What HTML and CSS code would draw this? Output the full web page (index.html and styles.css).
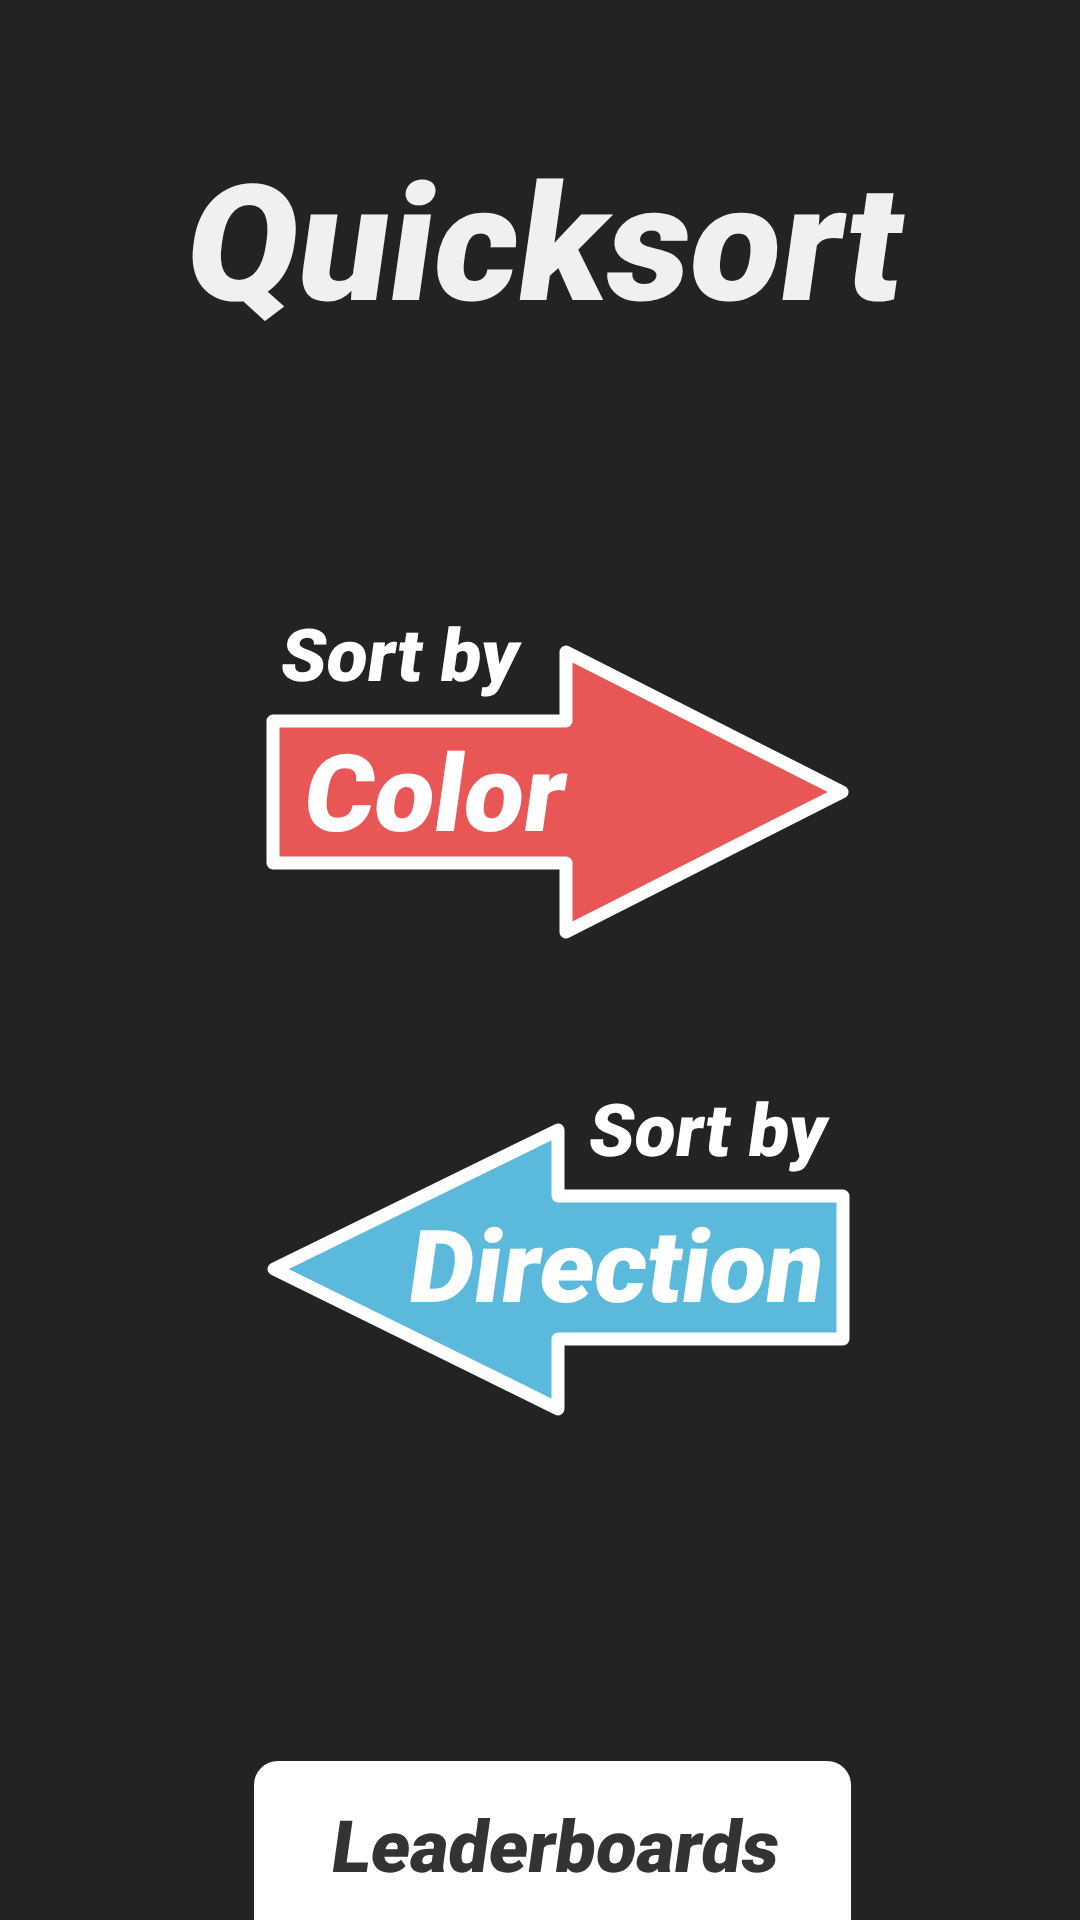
FILE: index.html
```html
<!DOCTYPE html>
<html lang="en">
<head>
<meta charset="utf-8">
<title>Quicksort</title>
<link rel="stylesheet" href="styles.css">
</head>
<body>
<main class="screen">
  <h1 class="title"><span class="slant">Quicksort</span></h1>

  <section class="arrow-block arrow-red">
    <svg class="arrow-shape" viewBox="0 0 1080 330" width="1080" height="330">
      <polygon points="273,101 566,101 566,32 842,172 566,312 566,243 273,243" fill="#E95656" stroke="#FFFFFF" stroke-width="13" stroke-linejoin="round"/>
    </svg>
    <span class="label label-red slant">Sort by</span>
    <span class="word word-red slant">Color</span>
  </section>

  <section class="arrow-block arrow-blue">
    <svg class="arrow-shape" viewBox="0 0 1080 340" width="1080" height="340">
      <polygon points="274,179 558,40 558,106 843,106 843,249 558,249 558,319" fill="#5BBADC" stroke="#FFFFFF" stroke-width="13" stroke-linejoin="round"/>
    </svg>
    <span class="label label-blue slant">Sort by</span>
    <span class="word word-blue slant">Direction</span>
  </section>

  <div class="spacer"></div>

  <div class="leader-btn"><span class="slant">Leaderboards</span></div>
</main>
</body>
</html>
```

FILE: styles.css
```css
html, body {
  margin: 0;
  padding: 0;
  background: #232323;
}

.screen {
  width: 1080px;
  height: 1920px;
  display: flex;
  flex-direction: column;
  align-items: stretch;
  overflow: hidden;
  font-family: "Roboto", "Noto Sans", sans-serif;
  font-style: normal;
  font-weight: 900;
}

.slant {
  display: inline-block;
  font-style: normal;
  font-synthesis: none;
  transform: skewX(-8deg);
  transform-origin: 50% 84%;
}

.title {
  margin: 0;
  padding-top: 164px;
  padding-right: 4px;
  height: 192px;
  line-height: 162px;
  font-size: 162px;
  font-weight: 900;
  color: #F0F0F0;
  text-align: center;
}

.arrow-block {
  position: relative;
  width: 1080px;
}

.arrow-red {
  margin-top: 264px;
  height: 330px;
}

.arrow-blue {
  margin-top: 140px;
  height: 340px;
}

.arrow-shape {
  display: block;
}

.label,
.word {
  position: absolute;
  line-height: 1;
  color: #FFFFFF;
  white-space: nowrap;
}

.label {
  font-size: 73px;
}

.label-red {
  left: 278px;
  top: 0px;
}

.word-red {
  left: 300px;
  top: 121px;
  font-size: 107px;
}

.label-blue {
  left: 586px;
  top: 5px;
}

.word-blue {
  left: 405px;
  top: 127px;
  font-size: 101px;
}

.spacer {
  flex: 1;
}

.leader-btn {
  align-self: center;
  margin-left: 24px;
  width: 597px;
  height: 159px;
  box-sizing: border-box;
  display: flex;
  justify-content: center;
  align-items: flex-start;
  padding-top: 51px;
  border-radius: 24px 24px 0 0;
  background: #FFFFFF;
  color: #333333;
  font-size: 72px;
  line-height: 1;
}
```
